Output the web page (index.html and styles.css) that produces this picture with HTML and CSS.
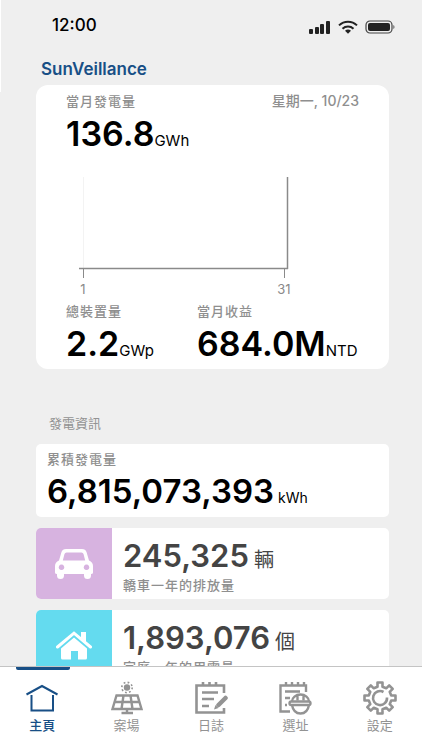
FILE: index.html
```html
<!DOCTYPE html>
<html lang="zh-Hant">
<head>
  <meta charset="UTF-8">
  <meta name="viewport" content="width=device-width, initial-scale=1">
  <title>SunVeillance</title>
  <link rel="stylesheet" href="styles.css">
</head>
<body>

  <header class="status-bar">
    <span class="time">12:00</span>
    <div class="status-icons">
      <svg width="22" height="14" viewBox="0 0 22 14" fill="#222">
        <rect x="0" y="9" width="4" height="5" rx="1"/>
        <rect x="6" y="7" width="4" height="7" rx="1"/>
        <rect x="11" y="4" width="4" height="10" rx="1"/>
        <rect x="17" y="1" width="4" height="13" rx="1"/>
      </svg>
      <svg width="20" height="14" viewBox="0 0 20 14" fill="none" stroke="#222" stroke-width="2">
        <path d="M1 5.4a13 13 0 0 1 18 0"/>
        <path d="M4.5 8.8a8 8 0 0 1 11 0"/>
        <path d="M10 13.8l-3-3a4.5 4.5 0 0 1 6 0z" fill="#222" stroke="none"/>
      </svg>
      <svg width="30" height="14" viewBox="0 0 30 14">
        <rect x="1" y="1" width="26" height="12" rx="4" fill="none" stroke="#444" stroke-width="1.2"/>
        <rect x="3" y="3" width="22" height="8" rx="2" fill="#222"/>
        <path d="M28.2 5q1.4 .6 1.4 2t-1.4 2z" fill="#777"/>
      </svg>
    </div>
  </header>

  <main class="content">
    <h1 class="brand">SunVeillance</h1>

    <section class="summary">
      <div class="summary-head">
        <h2 class="label">當月發電量</h2>
        <span class="label date">星期一, 10/23</span>
      </div>
      <p class="figure">136.8<span class="unit">GWh</span></p>

      <svg class="chart" width="230" height="126" viewBox="0 0 230 126" fill="none" stroke="#8a8a8a">
        <path d="M17.5 0V91" stroke="#f3f3f3"/>
        <path d="M221.5 0V92M13 91.5H222" stroke-width="1.5"/>
        <path d="M17.5 92v9M218.5 92v9"/>
        <text x="17" y="117" text-anchor="middle">1</text>
        <text x="218" y="117" text-anchor="middle">31</text>
      </svg>

      <div class="totals">
        <div>
          <h2 class="label">總裝置量</h2>
          <p class="figure">2.2<span class="unit">GWp</span></p>
        </div>
        <div>
          <h2 class="label">當月收益</h2>
          <p class="figure">684.0M<span class="unit">NTD</span></p>
        </div>
      </div>
    </section>

    <h2 class="section-title">發電資訊</h2>

    <section class="card energy">
      <h3 class="label">累積發電量</h3>
      <p class="figure">6,815,073,393<span class="unit spaced">kWh</span></p>
    </section>

    <section class="card saving">
      <div class="tile car">
        <svg width="38" height="30" viewBox="0 0 38 30">
          <path fill="#fff" fill-rule="evenodd" d="M11 0H27Q30.5 0 31.5 3L34 11.5Q38 13 38 17V23.5Q38 25 36 25V26.5A3.2 3.2 0 0 1 29 26.5V25H9V26.5A3.2 3.2 0 0 1 2 26.5V25Q0 25 0 23.5V17Q0 13 4 11.5L6.5 3Q7.5 0 11 0ZM11.5 3.5Q10 3.5 9.5 5L7.8 11.5H30.2L28.5 5Q28 3.5 26.5 3.5ZM6.5 15.5a2.8 2.8 0 1 0 .01 0ZM31.5 15.5a2.8 2.8 0 1 0 .01 0Z"/>
        </svg>
      </div>
      <div class="saving-text">
        <p class="figure">245,325<span class="counter">輛</span></p>
        <h3 class="label">轎車一年的排放量</h3>
      </div>
    </section>

    <section class="card saving">
      <div class="tile home">
        <svg width="36" height="30" viewBox="0 0 36 30">
          <path d="M1.5 16L18 2.2 34.5 16" fill="none" stroke="#fff" stroke-width="3" stroke-linecap="round"/>
          <path d="M25 1h5v10l-5-4.2zM18 6.5L31 17.5V27q0 1.5-1.5 1.5H22V20h-7v8.5H6.5Q5 28.5 5 27V17.5z" fill="#fff"/>
        </svg>
      </div>
      <div class="saving-text">
        <p class="figure">1,893,076<span class="counter">個</span></p>
        <h3 class="label">家庭一年的用電量</h3>
      </div>
    </section>
  </main>

  <nav class="tab-bar">
    <a class="tab active" href="#home">
      <svg width="34" height="34" viewBox="0 0 34 34" fill="none" stroke="currentColor" stroke-width="2">
        <path d="M1.5 13.5L17 5 32.5 13.5"/>
        <path d="M6.5 14V29.5H28V14"/>
      </svg>
      主頁
    </a>
    <a class="tab" href="#sites">
      <svg width="34" height="34" viewBox="0 0 34 34" fill="none" stroke="currentColor" stroke-width="2.4">
        <circle cx="17" cy="6.5" r="3.2" fill="currentColor" stroke="none"/>
        <circle cx="17" cy="6.5" r="5.2" stroke-width="1.6" stroke-dasharray="1.8 2.28"/>
        <path d="M6.5 14.5H27.5L31.5 28H2.5ZM4.5 21H29.5M13.5 14.5L11.5 28M20.5 14.5L22.5 28"/>
        <path d="M17 28v4M11.5 32H23"/>
      </svg>
      案場
    </a>
    <a class="tab" href="#logs">
      <svg width="34" height="34" viewBox="0 0 34 34" fill="none" stroke="currentColor" stroke-width="2.6">
        <path d="M30 12V4.5H2.5V31.5H30V27M9 1v4M15.5 1v4M22 1v4"/>
        <path d="M8 11.5H24M8 18H20M8 25H15"/>
        <path d="M31.5 17L24.5 24" stroke-width="4.5" stroke-linecap="round"/>
        <path d="M21.5 24l3 3-4.5 1.5z" fill="currentColor" stroke="none"/>
      </svg>
      日誌
    </a>
    <a class="tab" href="#location">
      <svg width="34" height="34" viewBox="0 0 34 34" fill="none" stroke="currentColor" stroke-width="2.4">
        <path d="M28 11V4.5H2.5V30.5H12M8 1v4M14 1v4M20 1v4M26 1v4"/>
        <path d="M7 10.5H22M7 17h5M7 24h2"/>
        <path d="M14 20.5a8.5 7 0 0 1 17 0M19.5 14.5v5M25.5 14.5v5"/>
        <rect x="11.5" y="20.5" width="21" height="3.5" rx="1.7"/>
        <path d="M14 24q1.5 8.5 8.5 8.5t8.5-8.5"/>
      </svg>
      選址
    </a>
    <a class="tab" href="#settings">
      <svg width="34" height="34" viewBox="0 0 34 34" fill="none" stroke="currentColor" stroke-width="2.6" stroke-linejoin="round">
        <path d="M14.5 5.8V1.5h5v4.3L23.2 7.3 26.2 4.3 29.7 7.8 26.7 10.8 28.2 14.5h4.3v5h-4.3L26.7 23.2 29.7 26.2 26.2 29.7 23.2 26.7 19.5 28.2v4.3h-5v-4.3L10.8 26.7 7.8 29.7 4.3 26.2 7.3 23.2 5.8 19.5H1.5v-5h4.3L7.3 10.8 4.3 7.8 7.8 4.3 10.8 7.3z"/>
        <path d="M20.5 11a7 7 0 1 0 3.5 5.5"/>
      </svg>
      設定
    </a>
  </nav>

</body>
</html>
```
FILE: styles.css
```css
* {
  box-sizing: border-box;
}

body {
  margin: 0;
  height: 100vh;
  display: flex;
  flex-direction: column;
  background: #efefef;
  color: #000;
  font-family: Inter, "Noto Sans CJK TC", sans-serif;
}

/* light edge beside the header */
body::before {
  content: "";
  position: absolute;
  top: 0;
  left: 0;
  width: 1px;
  height: 92px;
  background: #fff;
}

h1, h2, h3, p {
  margin: 0;
}

svg {
  display: block;
}

/* status bar */
.status-bar {
  display: flex;
  justify-content: space-between;
  align-items: center;
  padding: 12px 27px 0 52px;
  height: 40px;
}

.time {
  margin-bottom: 2px;
  font-size: 17px;
  font-weight: 500;
  line-height: 24px;
}

.status-icons {
  display: flex;
  gap: 7px;
  margin-top: 2px;
}

/* content */
.content {
  flex: 1;
  min-height: 0;
  overflow: hidden;
  padding: 17px 33px 0 36px;
}

.brand {
  padding-left: 5px;
  margin-bottom: 4px;
  color: #184f86;
  font-size: 17px;
  font-weight: 600;
  line-height: 24px;
}

.label {
  color: #8f8f8f;
  font-size: 13px;
  font-weight: 500;
  line-height: 20px;
  letter-spacing: 1px;
}

.date {
  font-size: 14px;
  letter-spacing: 0;
}

.figure {
  font-size: 33px;
  font-weight: 600;
  line-height: 40px;
  white-space: nowrap;
}

.unit {
  font-size: 15px;
  font-weight: 400;
  line-height: 1;
}

.spaced {
  margin-left: 4px;
  font-size: 14px;
}

.summary {
  padding: 6px 30px 5px;
  background: #fff;
  border-radius: 12px;
}

.summary .figure {
  font-size: 34px;
}

.summary-head {
  display: flex;
  justify-content: space-between;
  margin-bottom: 3px;
}

.chart {
  margin-top: 23px;
  margin-bottom: -2px;
}

.chart text {
  fill: #8a8a8a;
  stroke: none;
  font-size: 13px;
}

.totals {
  display: grid;
  grid-template-columns: 131px 1fr;
}

.totals .label {
  margin-bottom: 3px;
}

.section-title {
  margin: 44px 0 11px 13px;
  color: #939393;
  font-size: 13px;
  font-weight: 400;
  line-height: 20px;
}

.card {
  overflow: hidden;
  margin-bottom: 11px;
  background: #fff;
  border-radius: 5px;
}

.energy {
  padding: 5px 11px 6px;
}

.energy .label {
  margin-bottom: 2px;
}

.saving {
  display: flex;
}

.tile {
  display: flex;
  align-items: center;
  justify-content: center;
  width: 76px;
}

.car {
  background: #d7b3e0;
}

.home {
  background: #64dbef;
}

.saving-text {
  padding: 9px 11px 4px;
}

.saving .figure {
  color: #444;
  font-size: 31px;
  line-height: 38px;
}

.counter {
  margin-left: 5px;
  font-size: 20px;
  font-weight: 400;
  line-height: 1;
}

/* tab bar */
.tab-bar {
  display: grid;
  grid-template-columns: repeat(5, 1fr);
  height: 84px;
  background: #fff;
  border-top: 1px solid #c4c4c4;
}

.tab {
  position: relative;
  display: flex;
  flex-direction: column;
  align-items: center;
  padding-top: 14px;
  color: #939393;
  font-size: 13px;
  line-height: 20px;
  text-decoration: none;
}

.active {
  color: #184f86;
  font-weight: 500;
}

.active::before {
  content: "";
  position: absolute;
  top: 0;
  left: 16px;
  right: 14px;
  height: 3px;
  background: #184f86;
  border-radius: 0 0 2px 2px;
}
```
